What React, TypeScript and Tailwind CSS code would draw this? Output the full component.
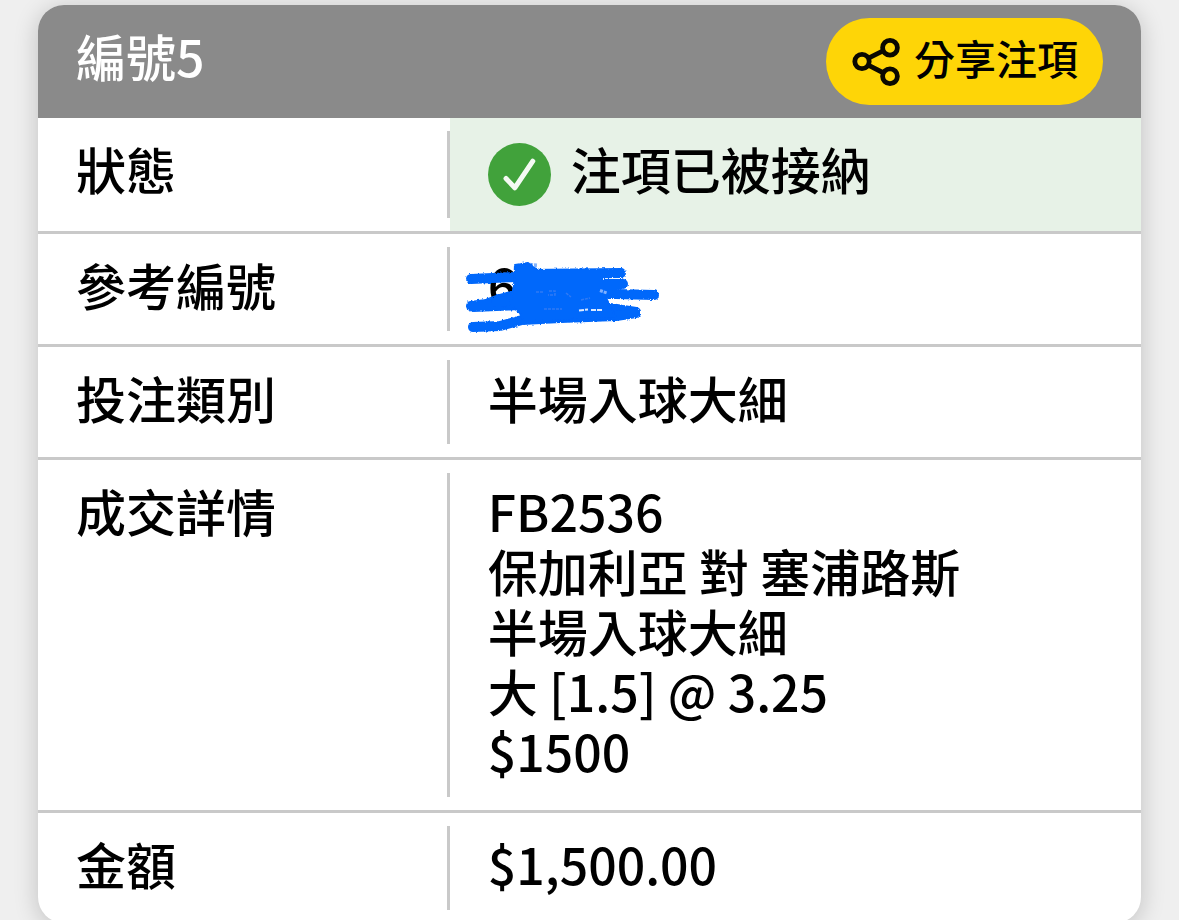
import type { ReactNode } from "react";

function ShareIcon() {
  return (
    <svg viewBox="-1 0 50 50" className="h-[50px] w-[50px] shrink-0" fill="none" stroke="#0a0800" strokeWidth="4.8" aria-hidden="true">
      <circle cx="10" cy="24.5" r="7.2" />
      <circle cx="38" cy="10.7" r="7.4" />
      <circle cx="38" cy="39.3" r="7.4" />
      <path d="M16.5 21.2 31.5 13.7M16.3 28.2 31.7 36" />
    </svg>
  );
}

function AcceptedIcon() {
  return (
    <svg viewBox="0 0 63 63" className="mt-[5px] -mb-[5px] h-[63px] w-[63px] shrink-0" aria-hidden="true">
      <circle cx="31.5" cy="31.5" r="31.5" fill="#41a23b" />
      <path d="M18 35.5 26.8 44.8 44.8 18.2" fill="none" stroke="#f4faf3" strokeWidth="5" strokeLinecap="round" strokeLinejoin="round" />
    </svg>
  );
}

function Scribble() {
  return (
    <svg viewBox="0 0 204 80" className="absolute top-[22px] left-[10px] h-20 w-[204px]" aria-hidden="true">
      <defs>
        <filter id="chalk" x="-5%" y="-10%" width="110%" height="120%">
          <feTurbulence type="fractalNoise" baseFrequency="0.45" numOctaves="2" seed="4" result="noise" />
          <feDisplacementMap in="SourceGraphic" in2="noise" scale="3" xChannelSelector="R" yChannelSelector="G" result="rough" />
          <feGaussianBlur in="rough" stdDeviation="0.4" />
        </filter>
      </defs>
      <g filter="url(#chalk)" fill="none" stroke="#0667fb" strokeWidth="10" strokeLinecap="round" strokeLinejoin="round">
        <path d="M11 23 56 21" />
        <path d="M68 18 161 17" />
        <path d="M60 28 163 28" />
        <path d="M11 50 26 48 40 43 58 38M13 51 60 49" />
        <path d="M36 46 60 44" />
        <path d="M100 38 156 38 194 39" />
        <path d="M120 48 150 52 176 56" />
        <path d="M13 71 40 70 62 64 100 62 156 60 176 57" />
        <path
          d="M55 9 68 7 72 10 79 14 142 14 142 34 148 46 152 54 156 62 110 64 64 66 60 57 54 52 50 46 54 30Z"
          fill="#0667fb"
          strokeWidth="2"
        />
      </g>
      <path d="M66 8.5 77 9.500" fill="none" stroke="#0667fb" strokeOpacity="0.5" strokeWidth="4" strokeDasharray="3 1" />
      <path d="M119 54.5 128 53.5M131 54 142 54" fill="none" stroke="#dceaff" strokeWidth="2" strokeDasharray="5 1" />
      <path d="M140 34.500 147 37" fill="none" stroke="#7fb0ff" strokeWidth="3" strokeDasharray="3 1" />
      <path d="M76 36h8M89 35h6v4h-7M106 37l5 4M84 53h18M121 44l9-2" fill="none" stroke="#2f7af5" strokeWidth="1.5" strokeDasharray="3 1" />
    </svg>
  );
}

function Row({ label, highlighted, children }: { label: string; highlighted?: boolean; children: ReactNode }) {
  return (
    <div className="grid grid-cols-[28fr_47fr] border-b-[3px] border-[#c9c9c9] last:border-b-0">
      <dt className="flex py-[13px]">
        <span className="grow border-r-[3px] border-[#c9c9c9] pt-[7px] pb-[9px] pl-[38px]">{label}</span>
      </dt>
      <dd className={highlighted ? "relative bg-[#e7f2e7] px-[38px] pt-5 pb-[30px]" : "relative px-[38px] pt-5 pb-[30px]"}>{children}</dd>
    </div>
  );
}

export default function App() {
  return (
    <main
      lang="zh-Hant"
      className="h-screen overflow-hidden bg-[#efefef] px-[38px] pt-[5px] font-['Noto_Sans_CJK_TC',sans-serif] text-[50px] leading-[60px] font-medium text-black"
    >
      <section className="overflow-hidden rounded-[26px] bg-white shadow-[0_4px_24px_rgba(0,0,0,0.2)]">
        <header className="flex items-start justify-between bg-[#8a8a8a] px-[38px] py-[13px]">
          <h2 className="pt-[7px] text-white">編號5</h2>
          <button type="button" className="flex h-[87px] items-center gap-[13px] rounded-full bg-[#fed507] px-[25px] text-[41px]">
            <ShareIcon />
            <span className="pb-2.5">分享注項</span>
          </button>
        </header>
        <dl>
          <Row label="狀態" highlighted>
            <div className="flex items-start gap-5">
              <AcceptedIcon />
              <span>注項已被接納</span>
            </div>
          </Row>
          <Row label="參考編號">
            6
            <Scribble />
          </Row>
          <Row label="投注類別">半場入球大細</Row>
          <Row label="成交詳情">
            <p>FB2536</p>
            <p>保加利亞 對 塞浦路斯</p>
            <p>半場入球大細</p>
            <p>大 [1.5] @ 3.25</p>
            <p>$1500</p>
          </Row>
          <Row label="金額">$1,500.00</Row>
        </dl>
      </section>
    </main>
  );
}
